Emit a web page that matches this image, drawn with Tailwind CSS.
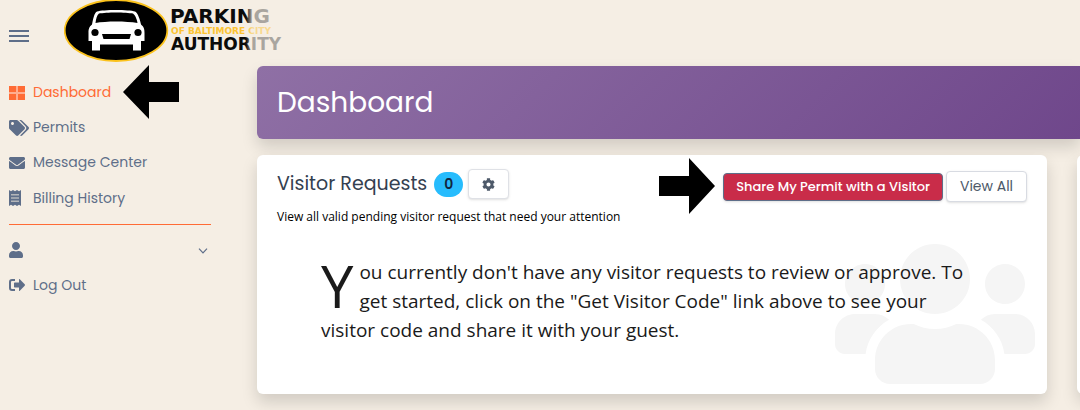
<!DOCTYPE html>
<html lang="en">
<head>
    <meta charset="UTF-8">
    <meta name="viewport" content="width=device-width, initial-scale=1.0">
    <title>Dashboard - Parking Authority of Baltimore City</title>
    <script src="https://cdn.jsdelivr.net/npm/@tailwindcss/browser@4"></script>
</head>
<body class="min-h-screen overflow-x-hidden bg-[#f5eee4] font-[Poppins,Inter,sans-serif] text-[#5e6e89]">
    <header class="flex h-[66px] items-start pl-2">
        <button type="button" aria-label="Toggle menu" class="mt-[29px] ml-px w-5">
            <svg class="h-[14px] w-5" viewBox="0 0 20 14" fill="currentColor"><path d="M0 1h20v2H0zM0 6h20v2H0zM0 11h20v2H0z"/></svg>
        </button>
        <a href="#" aria-label="Parking Authority of Baltimore City" class="ml-[35px]">
            <svg class="h-[62px] w-[226px]" viewBox="0 0 226 62">
                <defs>
                    <linearGradient id="fade" gradientUnits="userSpaceOnUse" x1="182" y1="0" x2="188" y2="0">
                        <stop offset="0" stop-color="#0b0b0b"/>
                        <stop offset="1" stop-color="#a9a59f"/>
                    </linearGradient>
                    <linearGradient id="fadeGold" gradientUnits="userSpaceOnUse" x1="182" y1="0" x2="188" y2="0">
                        <stop offset="0" stop-color="#fcc333"/>
                        <stop offset="1" stop-color="#f8d98f"/>
                    </linearGradient>
                </defs>
                <ellipse cx="52" cy="30.5" rx="51.3" ry="30.5" fill="#000" stroke="#fbc21c" stroke-width="1.8"/>
                <!-- car, seen from the front -->
                <path fill="#fff" d="M33 11.500C39 9.500 65 9.500 71 11.500C74 13 76 20 77 24.500C80 27 80.500 29 80.500 33V41H77V50.500H69V44.500H36V50.500H28V41H24.500V33C24.500 29 25 27 28 24.500C29 20 30 13 33 11.500Z"/>
                <path d="M35 13.500C42 12 62 12 69 13.500C71 15 73 19 73.500 23C62 21 42 21 31.500 23C32 19 33 15 35 13.500ZM38 34H67L65.500 39H39.500Z"/>
                <circle cx="31" cy="32.500" r="3.600"/>
                <circle cx="74" cy="32.500" r="3.600"/>
                <g font-family="DejaVu Sans, sans-serif" font-weight="700">
                    <text x="106" y="23" font-size="20" fill="url(#fade)">PARKING</text>
                    <text x="107" y="34" font-size="9" fill="url(#fadeGold)">OF BALTIMORE CITY</text>
                    <text x="107" y="50" font-size="17" fill="url(#fade)">AUTHORITY</text>
                </g>
            </svg>
        </a>
    </header>

    <div class="flex">
        <nav class="w-[257px] shrink-0 pt-[9px] pr-[46px] pl-[9px] text-[14px]">
            <ul>
                <li class="relative">
                    <a href="#" class="flex h-[35px] items-center gap-2 text-[#ff6b35]">
                        <svg class="h-[14px] w-4" viewBox="0 0 16 14"><path fill="#ffad8f" d="M0 0h16v14H0z"/><path fill="currentColor" d="M0 0h7v6H0zM9 0h7v6H9zM0 8h7v6H0zM9 8h7v6H9z"/></svg>
                        Dashboard
                    </a>
                    <svg class="absolute -top-[11px] left-[114px] h-[56px] w-[56px]" viewBox="0 0 56 56"><path d="M0 28 26 1V18H56V38H26V55Z"/></svg>
                </li>
                <li>
                    <a href="#" class="flex h-[35px] items-center gap-1">
                        <svg class="h-4 w-5" viewBox="0 0 640 512" fill="currentColor"><path d="M497.941 225.941L286.059 14.059A48 48 0 0 0 252.118 0H48C21.49 0 0 21.49 0 48v204.118a48 48 0 0 0 14.059 33.941l211.882 211.882c18.744 18.745 49.136 18.746 67.882 0l204.118-204.118c18.745-18.745 18.745-49.137 0-67.882zM112 160c-26.51 0-48-21.49-48-48s21.49-48 48-48 48 21.49 48 48-21.49 48-48 48zm513.941 133.823L421.823 497.941c-18.745 18.745-49.137 18.745-67.882 0l-.36-.36L527.64 323.522c16.999-16.999 26.36-39.6 26.36-63.64s-9.362-46.641-26.36-63.64L331.397 0h48.721a48 48 0 0 1 33.941 14.059l211.882 211.882c18.745 18.745 18.745 49.137 0 67.882z"/></svg>
                        Permits
                    </a>
                </li>
                <li>
                    <a href="#" class="flex h-[35px] items-center gap-2">
                        <svg class="size-4" viewBox="0 0 512 512" fill="currentColor"><path d="M502.3 190.8c3.9-3.1 9.7-.2 9.7 4.7V400c0 26.5-21.5 48-48 48H48c-26.5 0-48-21.5-48-48V195.6c0-5 5.7-7.8 9.7-4.7 22.4 17.4 52.1 39.5 154.1 113.6 21.1 15.4 56.7 47.8 92.2 47.6 35.7.3 72-32.8 92.3-47.6 102-74.1 131.6-96.3 154-113.7zM256 320c23.2.4 56.6-29.2 73.4-41.4 132.7-96.3 142.8-104.7 173.4-128.7 5.8-4.5 9.2-11.5 9.2-18.9v-19c0-26.5-21.5-48-48-48H48c-26.5 0-48 21.5-48 48v19c0 7.4 3.4 14.3 9.2 18.9 30.6 23.9 40.7 32.4 173.4 128.7 16.8 12.2 50.2 41.8 73.4 41.4z"/></svg>
                        Message Center
                    </a>
                </li>
                <li>
                    <a href="#" class="flex h-[36px] items-center gap-3">
                        <svg class="h-4 w-3" viewBox="0 0 12 16"><path fill="currentColor" d="M0 0l2 1.300L4 0l2 1.300L8 0l2 1.300L12 0v16l-2-1.300L8 16l-2-1.300L4 16l-2-1.300L0 16z"/><path fill="#b4b6b9" d="M2 4h8v1.500H2zM2 7.300h8v1.500H2zM2 10.600h8v1.500H2z"/></svg>
                        Billing History
                    </a>
                </li>
            </ul>
            <hr class="my-2 border-[#ff6b35]">
            <ul>
                <li>
                    <button type="button" aria-label="Account" class="flex h-[34px] w-full items-center justify-between pr-[3px]">
                        <svg class="h-4 w-[14px]" viewBox="0 0 448 512" fill="currentColor"><path d="M224 256c70.7 0 128-57.3 128-128S294.7 0 224 0 96 57.3 96 128s57.3 128 128 128zm89.600 32h-16.700c-22.200 10.200-46.900 16-72.900 16s-50.600-5.800-72.900-16h-16.700C60.200 288 0 348.200 0 422.400V464c0 26.500 21.500 48 48 48h352c26.500 0 48-21.500 48-48v-41.600c0-74.200-60.200-134.400-134.400-134.400z"/></svg>
                        <svg class="mt-[2px] h-[6px] w-[10px]" viewBox="0 0 10 6" fill="none" stroke="currentColor" stroke-width="1.2"><path d="M1 .7 5 4.900 9 .7"/></svg>
                    </button>
                </li>
                <li>
                    <a href="#" class="flex h-[36px] items-center gap-2">
                        <svg class="h-3 w-4" viewBox="0 0 16 12" fill="currentColor"><path d="M6 0v2H3Q2 2 2 3V9Q2 10 3 10H6V12H3Q0 12 0 9V3Q0 0 3 0ZM10 .6Q10-.3 10.800 .3L15.700 5.300Q16.200 6 15.700 6.700L10.800 11.700Q10 12.300 10 11.400V8.500H5.700Q5 8.500 5 7.800V4.200Q5 3.500 5.700 3.500H10Z"/></svg>
                        Log Out
                    </a>
                </li>
            </ul>
        </nav>

        <main class="min-w-0 flex-1">
            <div class="rounded-l-md bg-linear-[135deg] from-[#8f70a5] to-[#6f478b] px-5 py-4 shadow-[0_8px_16px_rgba(0,0,0,0.15)]">
                <h1 class="text-[28px] leading-[41px] text-white">Dashboard</h1>
            </div>

            <div class="mt-4 flex gap-[30px]">
                <section class="relative w-[96%] shrink-0 rounded-md bg-white pt-3 pb-[49px] pl-5 pr-5 shadow-[0_8px_16px_rgba(0,0,0,0.15)]">
                    <svg class="absolute right-3 bottom-0 h-[160px] w-[200px]" viewBox="0 0 640 512" fill="#f5f5f5"><path d="M96 224c35.300 0 64-28.700 64-64s-28.700-64-64-64-64 28.700-64 64 28.700 64 64 64zm448 0c35.300 0 64-28.700 64-64s-28.700-64-64-64-64 28.700-64 64 28.700 64 64 64zm32 32h-64c-17.600 0-33.500 7.100-45.100 18.600 40.300 22.100 68.900 62 75.100 109.400h66c17.700 0 32-14.300 32-32v-32c0-35.300-28.700-64-64-64zm-256 0c61.900 0 112-50.100 112-112S381.900 32 320 32 208 82.100 208 144s50.100 112 112 112zm76.800 32h-8.300c-20.800 10-43.900 16-68.500 16s-47.600-6-68.500-16h-8.300C179.600 288 128 339.600 128 403.200V432c0 26.500 21.500 48 48 48h288c26.500 0 48-21.500 48-48v-28.800c0-63.600-51.600-115.200-115.200-115.200zm-223.700-13.400C161.500 263.100 145.600 256 128 256H64c-35.300 0-64 28.700-64 64v32c0 17.700 14.300 32 32 32h65.900c6.300-47.400 34.900-87.300 75.200-109.400z"/></svg>
                    <div class="relative flex items-start justify-between">
                        <div class="flex items-center pt-[2px]">
                            <h2 class="text-[19px] leading-[28px] text-[#344050]">Visitor Requests</h2>
                            <span class="ml-[7px] flex h-[25px] w-[29px] items-center justify-center rounded-full bg-[#27bcfd] text-[14px] font-semibold text-[#12263f]">0</span>
                            <button type="button" aria-label="Settings" class="ml-[5px] flex h-[30px] w-[41px] items-center justify-center rounded border border-[#dfe1e6] bg-white text-[#4d5969] shadow-sm">
                                <svg class="size-[13px]" viewBox="0 0 512 512" fill="currentColor"><path d="M487.4 315.7l-42.6-24.600c4.300-23.200 4.300-47 0-70.200l42.600-24.600c4.900-2.800 7.100-8.600 5.500-14-11.100-35.600-30-67.800-54.700-94.600-3.800-4.100-10-5.100-14.800-2.300L380.8 110c-17.900-15.400-38.500-27.300-60.800-35.100V25.800c0-5.600-3.900-10.500-9.400-11.700-36.700-8.200-74.300-7.800-109.200 0-5.500 1.200-9.400 6.100-9.400 11.700V75c-22.200 7.900-42.800 19.800-60.800 35.100L88.7 85.500c-4.900-2.800-11-1.900-14.800 2.300-24.700 26.700-43.600 58.900-54.700 94.600-1.700 5.400.6 11.200 5.500 14L67.300 221c-4.300 23.200-4.300 47 0 70.200l-42.600 24.600c-4.900 2.800-7.100 8.600-5.500 14 11.100 35.600 30 67.800 54.700 94.600 3.800 4.100 10 5.100 14.800 2.300l42.600-24.600c17.900 15.400 38.500 27.300 60.800 35.100v49.200c0 5.600 3.900 10.500 9.400 11.700 36.700 8.200 74.300 7.800 109.200 0 5.500-1.200 9.400-6.100 9.400-11.700v-49.200c22.200-7.900 42.800-19.800 60.800-35.100l42.600 24.600c4.900 2.800 11 1.900 14.800-2.300 24.700-26.700 43.600-58.900 54.700-94.600 1.500-5.500-.7-11.300-5.600-14.100zM256 336c-44.100 0-80-35.900-80-80s35.900-80 80-80 80 35.900 80 80-35.900 80-80 80z"/></svg>
                            </button>
                        </div>
                        <div class="relative flex items-center gap-[3px] pt-1">
                            <svg class="absolute -top-[9px] right-[312px] h-[56px] w-[56px]" viewBox="0 0 56 56"><path d="M56 28 30 0V18H0V38H30V56Z"/></svg>
                            <button type="button" class="h-7 rounded-sm border border-[#5e6e89] bg-[#c92c49] px-3 text-[13px] font-medium whitespace-nowrap text-white shadow-sm">Share My Permit with a Visitor</button>
                            <button type="button" class="h-[31px] rounded border border-[#d8dbe2] bg-white px-[13px] text-[14px] whitespace-nowrap text-[#4d5969] shadow-sm">View All</button>
                        </div>
                    </div>
                    <p class="relative mt-[7px] font-['Open_Sans',sans-serif] text-[12px] leading-4 text-black">View all valid pending visitor request that need your attention</p>
                    <p class="relative mt-[33px] ml-11 max-w-[660px] font-['Open_Sans',sans-serif] text-[19px] leading-[29px] text-[#1a1a1a] first-letter:float-left first-letter:mr-[6px] first-letter:text-[58px] first-letter:leading-[56px]">You currently don't have any visitor requests to review or approve. To get started, click on the "Get Visitor Code" link above to see your visitor code and share it with your guest.</p>
                </section>
                <section class="w-[96%] shrink-0 rounded-md bg-white shadow-[0_8px_16px_rgba(0,0,0,0.15)]"></section>
            </div>
        </main>
    </div>
</body>
</html>
